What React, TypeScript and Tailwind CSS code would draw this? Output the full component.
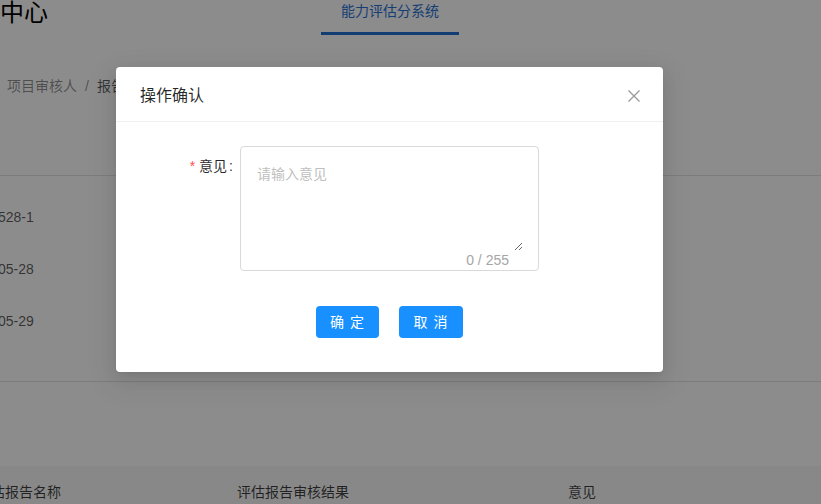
import React from "react";

const CJK = { fontFamily: '"Liberation Sans", "Noto Sans CJK SC", sans-serif' };

export default function App() {
  return (
    <div className="relative w-[821px] h-[504px] overflow-hidden bg-white" style={CJK}>
      {/* underlying page */}
      <div className="flex flex-col">
        <div className="flex h-[35px]">
          <div className="w-[321px] text-[24px] leading-[26px] text-black">中心</div>
          <div className="w-[138px] h-[35px] border-b-[3px] border-[#1f6fd1] text-center text-[14px] leading-[22px] text-[#2a72d4]">
            能力评估分系统
          </div>
        </div>
        <div className="mt-[40px] pl-[7px] text-[14px] leading-[22px] flex gap-[8px]">
          <span className="text-black/45">项目审核人</span>
          <span className="text-black/45">/</span>
          <span className="text-black/65">报告审核</span>
        </div>
        <div className="h-[79px] border-b border-[#e2e2e2]" />
        <div className="pt-[15px] h-[206px] border-b border-[#e2e2e2] text-[14px] text-black/65">
          <div className="h-[52px] flex items-center -ml-[2px]">528-1</div>
          <div className="h-[52px] flex items-center -ml-[2px]">05-28</div>
          <div className="h-[52px] flex items-center -ml-[2px]">05-29</div>
        </div>
        <div className="h-[84px]" />
        <div className="h-[60px] bg-[#f7f7f7] pt-[15px] flex text-[14px] leading-[22px] text-black/75 overflow-hidden">
          <div className="w-[237px] shrink-0 overflow-hidden">
            <span className="block -ml-[23px] whitespace-nowrap">评估报告名称</span>
          </div>
          <div className="w-[331px] shrink-0">评估报告审核结果</div>
          <div>意见</div>
        </div>
      </div>

      {/* mask */}
      <div className="absolute inset-0 bg-black/45" />

      {/* modal */}
      <div className="absolute left-[116px] top-[67px] w-[547px] rounded-[4px] bg-white shadow-[0_3px_6px_-4px_rgba(0,0,0,0.12),0_6px_16px_0_rgba(0,0,0,0.08),0_9px_28px_8px_rgba(0,0,0,0.05)]">
        <div className="flex items-center justify-between h-[55px] pt-[3px] pl-[24px] pr-[21px] border-b border-[#f0f0f0]">
          <div className="text-[16px] leading-[22px] text-black/85 font-normal">操作确认</div>
          <svg width="16" height="16" viewBox="0 0 16 16" fill="none" stroke="#999999" strokeWidth="1.3">
            <path d="M2.5 2.5 L13.5 13.5 M13.5 2.5 L2.5 13.5" />
          </svg>
        </div>
        <div className="pt-[24px] pb-[34px] flex flex-col">
          <div className="flex pl-[24px]">
            <div className="w-[93px] pt-[9px] text-right text-[14px] leading-[22px] text-black/85">
              <span className="text-[#ff4d4f] mr-[4px]">*</span>意见<span className="ml-[2px]">:</span>
            </div>
            <div className="ml-[7px] w-[299px] h-[125px] border border-[#d9d9d9] rounded-[4px] flex flex-col">
              <textarea
                placeholder="请输入意见"
                className="w-[282px] h-[104px] pl-[16px] pt-[16px] text-[14px] leading-[22px] outline-none border-none placeholder:text-[#bfbfbf] text-black/85"
                style={CJK}
              />
              <div className="flex justify-end pr-[29px] text-[14px] leading-[18px] text-[#a6a6a6]">0 / 255</div>
            </div>
          </div>
          <div className="mt-[35px] flex justify-center gap-[20px]">
            <button className="w-[63px] h-[32px] rounded-[4px] bg-[#1890ff] text-white text-[14px] tracking-[1px]">确 定</button>
            <button className="w-[64px] h-[32px] rounded-[4px] bg-[#1890ff] text-white text-[14px] tracking-[1px]">取 消</button>
          </div>
        </div>
      </div>
    </div>
  );
}
